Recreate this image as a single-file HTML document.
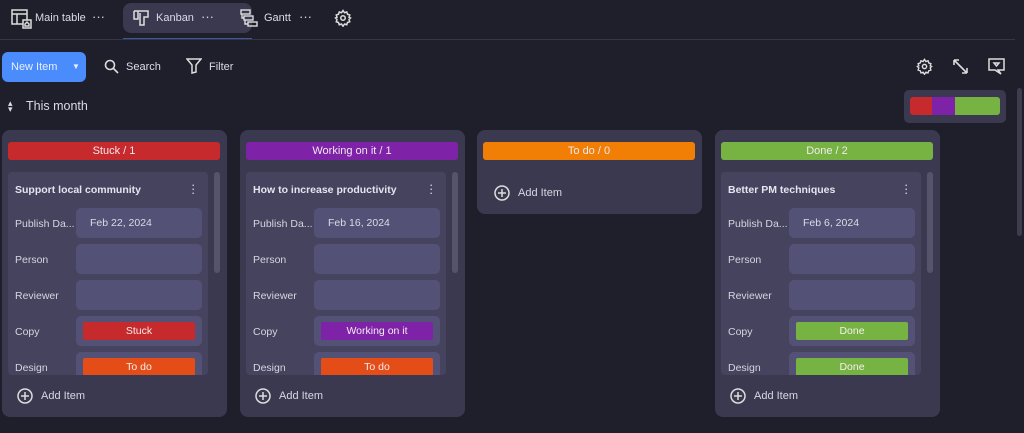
<!DOCTYPE html>
<html><head><style>
*{margin:0;padding:0;box-sizing:border-box}
body{width:1024px;height:433px;background:#1f1e2b;font-family:"Liberation Sans",sans-serif;color:#dcdbe6;position:relative;overflow:hidden;font-size:11px}
.a{position:absolute}
.t{position:absolute;top:12px;line-height:13px}
.col{position:absolute;top:130px;width:225px;height:287px;background:#3b394f;border-radius:8px;overflow:hidden}
.hd{position:absolute;left:6px;top:12px;width:212px;height:18px;border-radius:3px;text-align:center;line-height:18px;color:#f0e8ee;font-size:11px}
.card{position:absolute;left:6px;top:42px;width:200px;height:203px;background:#46435f;border-radius:4px;overflow:hidden}
.sb{position:absolute;left:212px;top:42px;width:6px;height:101px;background:#56546d;border-radius:3px}
.tt{position:absolute;left:7px;top:12px;font-size:10.5px;font-weight:bold;color:#e6e5ee}
.dots{position:absolute;left:183px;top:11px;width:3px;font-size:13px;line-height:4px;color:#ddd}
.lb{position:absolute;left:7px;font-size:10.5px;color:#d6d5e0}
.vb{position:absolute;left:68px;width:126px;height:30px;background:#545176;border-radius:5px;padding-left:14px;line-height:30px;font-size:10.5px}
.chip{position:absolute;left:7px;top:6px;width:112px;height:18px;border-radius:2px;text-align:center;line-height:18px;color:#f4eef0;font-size:10.5px}
.add{position:absolute;left:15px;top:258px;font-size:11px;color:#d8d7e2;line-height:16px}
.add svg{vertical-align:middle;margin-right:8px}
</style></head><body>
<!-- tabs -->
<div class="a" style="left:123px;top:3px;width:129px;height:30px;background:#3a3950;border-radius:8px"></div>
<div class="a" style="left:123px;top:38px;width:129px;height:2px;background:#3d5a96"></div>
<div class="a" style="left:0;top:39px;width:1015px;height:1px;background:#34344a"></div>
<svg class="a" style="left:11px;top:8px" width="22" height="22" viewBox="0 0 22 22" fill="none" stroke="#ddd" stroke-width="1.5"><rect x="1" y="2" width="15" height="14"/><path d="M1 6h15M6 6v10"/><rect x="12" y="12" width="8" height="8" fill="#1f1e2b"/><path d="M14 18v-2l2-2 2 2v2z"/></svg>
<div class="t" style="left:35px">Main table</div>
<div class="t" style="left:92px;font-size:13px;top:10px">···</div>
<svg class="a" style="left:133px;top:10px" width="16" height="16" viewBox="0 0 16 16" fill="none" stroke="#ddd" stroke-width="1.5"><path d="M1 1h14v6h-4v8h-4v-12M1 1v8h4v-8"/></svg>
<div class="t" style="left:156px">Kanban</div>
<div class="t" style="left:201px;font-size:13px;top:10px">···</div>
<svg class="a" style="left:240px;top:9px" width="18" height="18" viewBox="0 0 18 18" fill="none" stroke="#ddd" stroke-width="1.4"><rect x="1" y="1" width="9" height="4"/><rect x="4" y="7" width="9" height="4"/><rect x="8" y="13" width="9" height="4"/><path d="M2 5v4h2M5 11v4h3"/></svg>
<div class="t" style="left:264px">Gantt</div>
<div class="t" style="left:299px;font-size:13px;top:10px">···</div>
<svg class="a" style="left:334px;top:9px" width="18" height="18" viewBox="0 0 24 24" fill="none" stroke="#ddd" stroke-width="2"><circle cx="12" cy="12" r="3"/><path d="M12 2l2 3 3-1 1 3 3 1-1 3 2 1-2 2 1 3-3 1-1 3-3-1-2 3-2-3-3 1-1-3-3-1 1-3-2-2 2-1-1-3 3-1 1-3 3 1z"/></svg>
<!-- toolbar -->
<div class="a" style="left:2px;top:52px;width:84px;height:30px;background:#4a8cfb;border-radius:6px;color:#e8efff;line-height:30px;padding-left:9px">New Item<span style="position:absolute;left:70px;top:0;font-size:8px">▼</span></div>
<svg class="a" style="left:104px;top:59px" width="15" height="15" viewBox="0 0 15 15" fill="none" stroke="#ddd" stroke-width="1.6"><circle cx="6" cy="6" r="4.5"/><path d="M9.5 9.5l4.5 4.5"/></svg>
<div class="a" style="left:126px;top:61px">Search</div>
<svg class="a" style="left:186px;top:58px" width="16" height="16" viewBox="0 0 16 16" fill="none" stroke="#ddd" stroke-width="1.5"><path d="M1 1h14l-5 6v7l-4 1v-8z"/></svg>
<div class="a" style="left:209px;top:61px">Filter</div>
<svg class="a" style="left:916px;top:58px" width="17" height="17" viewBox="0 0 24 24" fill="none" stroke="#ddd" stroke-width="2"><circle cx="12" cy="12" r="3"/><path d="M12 2l2 3 3-1 1 3 3 1-1 3 2 1-2 2 1 3-3 1-1 3-3-1-2 3-2-3-3 1-1-3-3-1 1-3-2-2 2-1-1-3 3-1 1-3 3 1z"/></svg>
<svg class="a" style="left:952px;top:58px" width="17" height="17" viewBox="0 0 17 17" fill="none" stroke="#ddd" stroke-width="1.6"><path d="M2 2l13 13M2 2h5M2 2v5M15 15h-5M15 15v-5"/></svg>
<svg class="a" style="left:988px;top:58px" width="17" height="17" viewBox="0 0 17 17" fill="none" stroke="#ddd" stroke-width="1.5"><path d="M1 1h15v11h-6l3 4-6-4h-6z"/><path d="M6 5l2.5 3 2.5-3z"/></svg>
<div class="a" style="left:8px;top:100px;font-size:9px;line-height:6px">▴<br>▾</div>
<div class="a" style="left:26px;top:99px;font-size:12.5px">This month</div>
<div class="a" style="left:904px;top:90px;width:102px;height:33px;background:#3a3950;border-radius:5px"></div>
<div class="a" style="left:910px;top:97px;width:90px;height:18px;border-radius:3px;overflow:hidden;display:flex"><div style="width:22px;background:#c62a2c"></div><div style="width:23px;background:#7e22a8"></div><div style="flex:1;background:#77b342"></div></div>
<div class="a" style="left:1017px;top:88px;width:5px;height:148px;background:#3e3d50;border-radius:3px"></div>

<!-- col1 -->
<div class="col" style="left:2px">
<div class="hd" style="background:#c62a2c">Stuck / 1</div>
<div class="card"><div class="tt">Support local community</div><div class="dots">·<br>·<br>·</div>
<div class="lb" style="top:46px">Publish Da...</div><div class="vb" style="top:36px">Feb 22, 2024</div>
<div class="lb" style="top:82px">Person</div><div class="vb" style="top:72px"></div>
<div class="lb" style="top:118px">Reviewer</div><div class="vb" style="top:108px"></div>
<div class="lb" style="top:154px">Copy</div><div class="vb" style="top:144px"><div class="chip" style="background:#c62a2c">Stuck</div></div>
<div class="lb" style="top:190px">Design</div><div class="vb" style="top:180px"><div class="chip" style="background:#e44d18">To do</div></div>
</div><div class="sb"></div>
<div class="add"><svg width="16" height="16" viewBox="0 0 16 16" fill="none" stroke="#ddd" stroke-width="1.5"><circle cx="8" cy="8" r="7"/><path d="M8 4v8M4 8h8"/></svg>Add Item</div>
</div>
<!-- col2 -->
<div class="col" style="left:240px">
<div class="hd" style="background:#7e22a8">Working on it / 1</div>
<div class="card"><div class="tt">How to increase productivity</div><div class="dots">·<br>·<br>·</div>
<div class="lb" style="top:46px">Publish Da...</div><div class="vb" style="top:36px">Feb 16, 2024</div>
<div class="lb" style="top:82px">Person</div><div class="vb" style="top:72px"></div>
<div class="lb" style="top:118px">Reviewer</div><div class="vb" style="top:108px"></div>
<div class="lb" style="top:154px">Copy</div><div class="vb" style="top:144px"><div class="chip" style="background:#7e22a8">Working on it</div></div>
<div class="lb" style="top:190px">Design</div><div class="vb" style="top:180px"><div class="chip" style="background:#e44d18">To do</div></div>
</div><div class="sb"></div>
<div class="add"><svg width="16" height="16" viewBox="0 0 16 16" fill="none" stroke="#ddd" stroke-width="1.5"><circle cx="8" cy="8" r="7"/><path d="M8 4v8M4 8h8"/></svg>Add Item</div>
</div>
<!-- col3 -->
<div class="col" style="left:477px;height:84px">
<div class="hd" style="background:#f17f06">To do / 0</div>
<div class="add" style="top:55px;left:17px"><svg width="16" height="16" viewBox="0 0 16 16" fill="none" stroke="#ddd" stroke-width="1.5"><circle cx="8" cy="8" r="7"/><path d="M8 4v8M4 8h8"/></svg>Add Item</div>
</div>
<!-- col4 -->
<div class="col" style="left:715px">
<div class="hd" style="background:#77b342">Done / 2</div>
<div class="card"><div class="tt">Better PM techniques</div><div class="dots">·<br>·<br>·</div>
<div class="lb" style="top:46px">Publish Da...</div><div class="vb" style="top:36px">Feb 6, 2024</div>
<div class="lb" style="top:82px">Person</div><div class="vb" style="top:72px"></div>
<div class="lb" style="top:118px">Reviewer</div><div class="vb" style="top:108px"></div>
<div class="lb" style="top:154px">Copy</div><div class="vb" style="top:144px"><div class="chip" style="background:#77b342">Done</div></div>
<div class="lb" style="top:190px">Design</div><div class="vb" style="top:180px"><div class="chip" style="background:#77b342">Done</div></div>
</div><div class="sb"></div>
<div class="add"><svg width="16" height="16" viewBox="0 0 16 16" fill="none" stroke="#ddd" stroke-width="1.5"><circle cx="8" cy="8" r="7"/><path d="M8 4v8M4 8h8"/></svg>Add Item</div>
</div>
</body></html>
